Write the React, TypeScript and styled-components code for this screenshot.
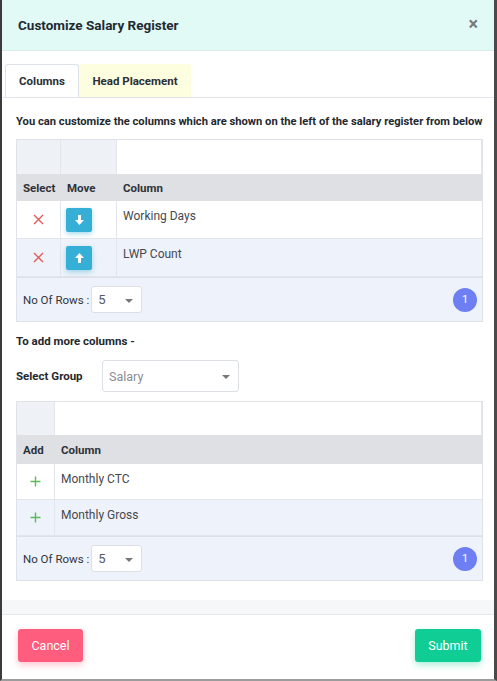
import React from 'react'
import styled, { createGlobalStyle } from 'styled-components'

const GlobalStyle = createGlobalStyle`
  html, body {
    margin: 0;
    padding: 0;
    background: #ffffff;
    font-family: Roboto, "Liberation Sans", Arial, sans-serif;
  }
  * { box-sizing: border-box; }
`

const Modal = styled.div`
  width: 497px;
  height: 681px;
  display: flex;
  flex-direction: column;
  background: #ffffff;
  border-left: 2px solid #3b3b3b;
  border-right: 3px solid #4a4a4a;
  border-bottom: 2px solid #9c9c9c;
  overflow: hidden;
`

const Header = styled.div`
  height: 51px;
  flex: none;
  display: flex;
  align-items: center;
  justify-content: space-between;
  padding: 0 16px 0 16px;
  background: #e2faf6;
  border-bottom: 1px solid #d8ebe8;
`

const Title = styled.h4`
  margin: 0;
  font-size: 13.5px;
  font-weight: 700;
  color: #1f2a33;
`

const Close = styled.span`
  font-size: 18px;
  font-weight: 700;
  color: #7a7a7a;
  line-height: 1;
  margin-top: -2px;
`

const TabBar = styled.div`
  display: flex;
  margin-top: 13px;
  padding-left: 3px;
  border-bottom: 1px solid #e1e5ea;
`

const Tab = styled.div<{ $active?: boolean }>`
  height: 33px;
  display: flex;
  align-items: center;
  justify-content: center;
  width: ${p => (p.$active ? '74px' : '112px')};
  font-size: 11.5px;
  font-weight: 700;
  color: #2a2f36;
  background: ${p => (p.$active ? '#ffffff' : '#fdfde0')};
  border: ${p => (p.$active ? '1px solid #dde2e8' : 'none')};
  border-bottom: none;
  border-radius: 3px 3px 0 0;
`

const Body = styled.div`
  flex: 1;
  padding: 0 11px 0 14px;
  border-bottom: 14px solid #f6f7f9;
`

const Intro = styled.p`
  margin: 17px 0 11px;
  font-size: 11.2px;
  font-weight: 700;
  color: #23282e;
  white-space: nowrap;
`

const Note = styled.p`
  margin: 12px 0 0;
  font-size: 11.5px;
  font-weight: 700;
  color: #23282e;
`

const GroupRow = styled.div`
  display: flex;
  align-items: center;
  margin: 12px 0 9px;
`

const GroupLabel = styled.span`
  width: 86px;
  white-space: nowrap;
  font-size: 11.5px;
  font-weight: 700;
  color: #23282e;
`

const Dropdown = styled.div<{ $w: number; $h: number }>`
  width: ${p => p.$w}px;
  height: ${p => p.$h}px;
  display: flex;
  align-items: center;
  justify-content: space-between;
  padding: 0 8px 0 6px;
  background: #ffffff;
  border: 1px solid #dcdfe4;
  border-radius: 3px;
  font-size: 12.5px;
  color: #8a8d92;
`

const Caret = styled.span`
  width: 0;
  height: 0;
  border-left: 4.5px solid transparent;
  border-right: 4.5px solid transparent;
  border-top: 4.5px solid #777;
  margin-top: 2px;
`

const Grid = styled.div<{ $cols: string }>`
  display: grid;
  grid-template-columns: ${p => p.$cols};
  border: 1px solid #dfe2e8;
`

const FilterCell = styled.div<{ $blank?: boolean; $h: number }>`
  height: ${p => p.$h}px;
  background: ${p => (p.$blank ? '#ffffff' : '#eef1f6')};
  border-right: 1px solid #e2e5ea;
  &:last-child { border-right: none; }
`

const HeadCell = styled.div<{ $h: number }>`
  height: ${p => p.$h}px;
  display: flex;
  align-items: center;
  padding-left: 6px;
  background: #dfe0e4;
  font-size: 11.5px;
  font-weight: 700;
  color: #2e3238;
`

const Cell = styled.div<{ $alt?: boolean; $h: number; $center?: boolean }>`
  height: ${p => p.$h}px;
  display: flex;
  align-items: ${p => (p.$center ? 'center' : 'flex-start')};
  justify-content: ${p => (p.$center ? 'center' : 'flex-start')};
  padding: ${p => (p.$center ? '0' : '8px 6px 0')};
  background: ${p => (p.$alt ? '#eef2fa' : '#ffffff')};
  border-right: 1px solid #e2e5ea;
  border-bottom: 1px solid #e2e5ea;
  font-size: 12px;
  color: #45494f;
`

const MoveCell = styled(Cell)`
  justify-content: flex-start;
  padding-left: 5px;
`

const MoveButton = styled.div`
  width: 26px;
  height: 24px;
  display: flex;
  align-items: center;
  justify-content: center;
  background: #35afd5;
  border-radius: 2px;
  box-shadow: 0 2px 5px rgba(53, 175, 213, 0.45);
`

const Footer = styled.div<{ $span: number }>`
  grid-column: 1 / span ${p => p.$span};
  height: 44px;
  display: flex;
  align-items: center;
  justify-content: space-between;
  padding: 0 5px 0 6px;
  background: #eef2fa;
  border-top: 1px solid #dde1e7;
`

const RowsPicker = styled.div`
  display: flex;
  align-items: center;
  gap: 2px;
  font-size: 11.5px;
  color: #30343a;
`

const Page = styled.div`
  width: 24px;
  height: 24px;
  border-radius: 50%;
  background: #6e7ef3;
  color: #ffffff;
  font-size: 11px;
  display: flex;
  align-items: center;
  justify-content: center;
`

const Actions = styled.div`
  height: 65px;
  flex: none;
  display: flex;
  align-items: center;
  justify-content: space-between;
  padding: 0 13px 3px 16px;
  border-top: 1px solid #e6e8ec;
`

const Button = styled.button<{ $tone: 'cancel' | 'submit' }>`
  height: 33px;
  width: ${p => (p.$tone === 'cancel' ? '65px' : '66px')};
  border: none;
  border-radius: 3px;
  font-family: inherit;
  font-size: 12.5px;
  color: #ffffff;
  background: ${p => (p.$tone === 'cancel' ? '#fe5d7d' : '#10cd96')};
  box-shadow: 0 3px 7px ${p => (p.$tone === 'cancel' ? 'rgba(254,93,125,0.35)' : 'rgba(16,205,150,0.35)')};
`

const Cross = () => (
  <svg width="11" height="11" viewBox="0 0 11 11">
    <path d="M1 1 L10 10 M10 1 L1 10" stroke="#e25b5b" strokeWidth="1.4" />
  </svg>
)

const Plus = () => (
  <svg width="11" height="11" viewBox="0 0 11 11">
    <path d="M5.5 0.5 V10.5 M0.5 5.5 H10.5" stroke="#5cba5c" strokeWidth="1.4" />
  </svg>
)

const Arrow = ({ up }: { up?: boolean }) => (
  <svg width="9" height="10" viewBox="0 0 9 10" style={up ? { transform: 'rotate(180deg)' } : undefined}>
    <path d="M3 0 H6 V5 H9 L4.5 10 L0 5 H3 Z" fill="#ffffff" />
  </svg>
)

function RowsFooter({ span }: { span: number }) {
  return (
    <Footer $span={span}>
      <RowsPicker>
        No Of Rows :
        <Dropdown $w={51} $h={27} style={{ color: '#555a60', fontSize: 13 }}>
          5<Caret />
        </Dropdown>
      </RowsPicker>
      <Page>1</Page>
    </Footer>
  )
}

const selected = [
  { name: 'Working Days', up: false },
  { name: 'LWP Count', up: true },
]

const available = ['Monthly CTC', 'Monthly Gross']

export default function App() {
  return (
    <>
      <GlobalStyle />
      <Modal>
        <Header>
          <Title>Customize Salary Register</Title>
          <Close>×</Close>
        </Header>
        <TabBar>
          <Tab $active>Columns</Tab>
          <Tab>Head Placement</Tab>
        </TabBar>
        <Body>
          <Intro>You can customize the columns which are shown on the left of the salary register from below</Intro>
          <Grid $cols="44px 56px 1fr">
            <FilterCell $h={34} />
            <FilterCell $h={34} />
            <FilterCell $h={34} $blank />
            <HeadCell $h={27}>Select</HeadCell>
            <HeadCell $h={27}>Move</HeadCell>
            <HeadCell $h={27}>Column</HeadCell>
            {selected.map((r, i) => (
              <React.Fragment key={r.name}>
                <Cell $h={38} $alt={i % 2 === 1} $center><Cross /></Cell>
                <MoveCell $h={38} $alt={i % 2 === 1} $center>
                  <MoveButton><Arrow up={r.up} /></MoveButton>
                </MoveCell>
                <Cell $h={38} $alt={i % 2 === 1} style={{ borderRight: 'none' }}>{r.name}</Cell>
              </React.Fragment>
            ))}
            <RowsFooter span={3} />
          </Grid>
          <Note>To add more columns -</Note>
          <GroupRow>
            <GroupLabel>Select Group</GroupLabel>
            <Dropdown $w={137} $h={32}>
              Salary<Caret />
            </Dropdown>
          </GroupRow>
          <Grid $cols="38px 1fr">
            <FilterCell $h={33} />
            <FilterCell $h={33} $blank />
            <HeadCell $h={29}>Add</HeadCell>
            <HeadCell $h={29}>Column</HeadCell>
            {available.map((name, i) => (
              <React.Fragment key={name}>
                <Cell $h={36} $alt={i % 2 === 1} $center><Plus /></Cell>
                <Cell $h={36} $alt={i % 2 === 1} style={{ borderRight: 'none' }}>{name}</Cell>
              </React.Fragment>
            ))}
            <RowsFooter span={2} />
          </Grid>
        </Body>
        <Actions>
          <Button $tone="cancel">Cancel</Button>
          <Button $tone="submit">Submit</Button>
        </Actions>
      </Modal>
    </>
  )
}
